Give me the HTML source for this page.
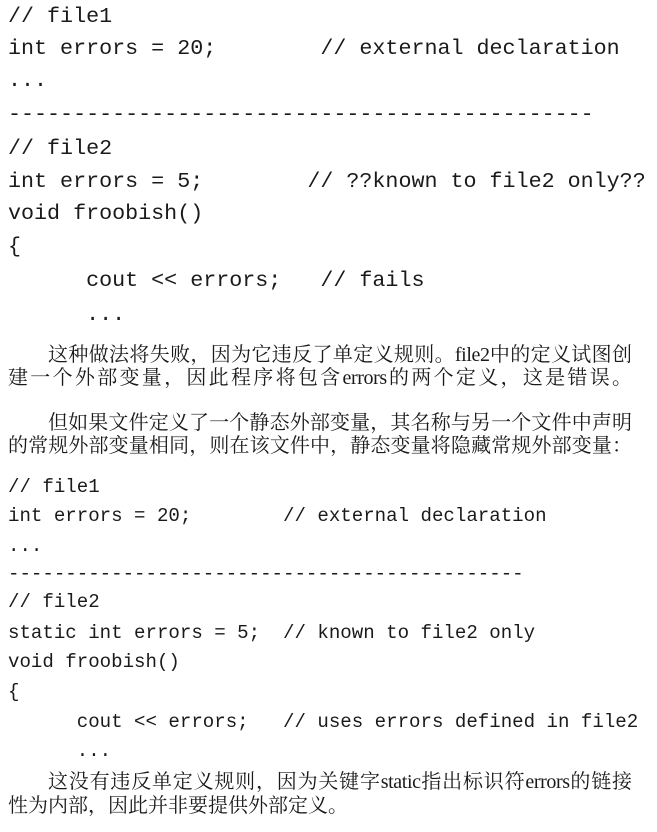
<!DOCTYPE html>
<html><head><meta charset="utf-8"><style>
html,body{margin:0;padding:0;background:#fff;}
body{width:657px;height:832px;position:relative;overflow:hidden;color:#1a1a1a;}
.c{position:absolute;left:8px;white-space:pre;font-family:"Liberation Mono",monospace;}
.a{font-size:21.7px;line-height:22px;height:22px;}
.b{font-size:19.1px;line-height:20px;height:20px;}
.t{position:absolute;left:8px;white-space:nowrap;font-family:"Liberation Serif","Noto Serif CJK SC",serif;font-size:20px;line-height:22px;height:22px;}
.j{text-align:justify;text-align-last:justify;text-justify:inter-character;white-space:normal;}
.t span{letter-spacing:-0.4px;}
</style></head><body>
<div class="c a" style="top:6px">// file1</div>
<div class="c a" style="top:38px">int errors = 20;        // external declaration</div>
<div class="c a" style="top:70px">...</div>
<div class="c a" style="top:104px">---------------------------------------------</div>
<div class="c a" style="top:138px">// file2</div>
<div class="c a" style="top:171px">int errors = 5;        // ??known to file2 only??</div>
<div class="c a" style="top:203px">void froobish()</div>
<div class="c a" style="top:236px">{</div>
<div class="c a" style="top:270px">      cout &lt;&lt; errors;   // fails</div>
<div class="c a" style="top:304px">      ...</div>

<div class="t j" style="top:344px;left:48px;width:584px">这种做法将失败，因为它违反了单定义规则。<span>file2</span>中的定义试图创</div>
<div class="t j" style="top:367px;width:624px">建一个外部变量，因此程序将包含<span>errors</span>的两个定义，这是错误。</div>
<div class="t j" style="top:412px;left:48px;width:584px">但如果文件定义了一个静态外部变量，其名称与另一个文件中声明</div>
<div class="t j" style="top:435px;width:624px">的常规外部变量相同，则在该文件中，静态变量将隐藏常规外部变量：</div>

<div class="c b" style="top:477px">// file1</div>
<div class="c b" style="top:506px">int errors = 20;        // external declaration</div>
<div class="c b" style="top:536px">...</div>
<div class="c b" style="top:564px">---------------------------------------------</div>
<div class="c b" style="top:592px">// file2</div>
<div class="c b" style="top:623px">static int errors = 5;  // known to file2 only</div>
<div class="c b" style="top:652px">void froobish()</div>
<div class="c b" style="top:682px">{</div>
<div class="c b" style="top:712px">      cout &lt;&lt; errors;   // uses errors defined in file2</div>
<div class="c b" style="top:741px">      ...</div>

<div class="t j" style="top:771px;left:48px;width:584px">这没有违反单定义规则，因为关键字<span>static</span>指出标识符<span>errors</span>的链接</div>
<div class="t" style="top:795px">性为内部，因此并非要提供外部定义。</div>
</body></html>
